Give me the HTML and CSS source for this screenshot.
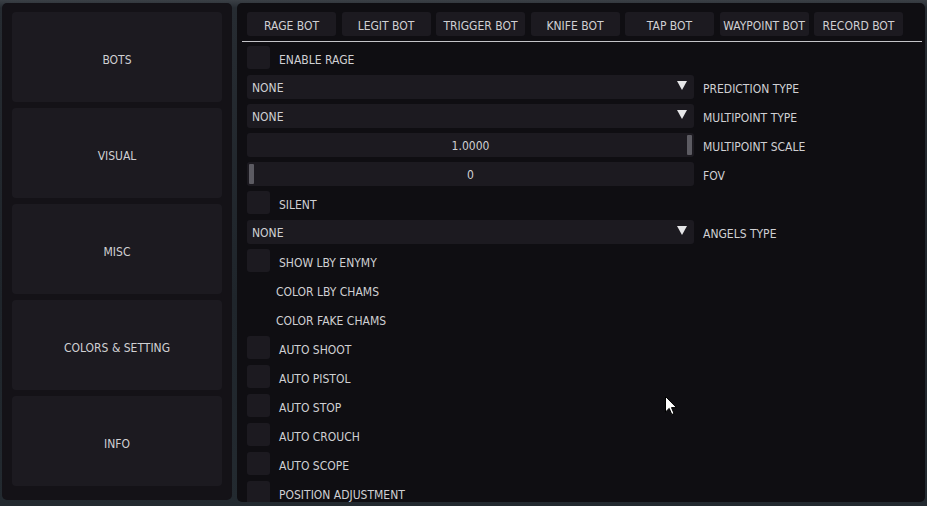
FILE: index.html
```html
<!DOCTYPE html>
<html>
<head>
<meta charset="utf-8">
<link rel="stylesheet" href="styles.css">
</head>
<body>
<div class="screen">
  <aside class="side">
    <div class="side-btn">BOTS</div>
    <div class="side-btn">VISUAL</div>
    <div class="side-btn">MISC</div>
    <div class="side-btn">COLORS &amp; SETTING</div>
    <div class="side-btn">INFO</div>
  </aside>
  <main class="main">
    <nav class="tabs">
      <div class="tab">RAGE BOT</div>
      <div class="tab">LEGIT BOT</div>
      <div class="tab">TRIGGER BOT</div>
      <div class="tab">KNIFE BOT</div>
      <div class="tab">TAP BOT</div>
      <div class="tab">WAYPOINT BOT</div>
      <div class="tab">RECORD BOT</div>
    </nav>
    <div class="sep"></div>
    <div class="rows">
      <div class="row"><span class="check"></span><span class="label">ENABLE RAGE</span></div>
      <div class="row"><div class="combo"><span class="combo-text">NONE</span><span class="arrow"></span></div><span class="side-label">PREDICTION TYPE</span></div>
      <div class="row"><div class="combo"><span class="combo-text">NONE</span><span class="arrow"></span></div><span class="side-label">MULTIPOINT TYPE</span></div>
      <div class="row"><div class="slider grab-right"><span class="grab"></span><span class="value">1.0000</span></div><span class="side-label">MULTIPOINT SCALE</span></div>
      <div class="row"><div class="slider grab-left"><span class="grab"></span><span class="value">0</span></div><span class="side-label">FOV</span></div>
      <div class="row"><span class="check"></span><span class="label">SILENT</span></div>
      <div class="row"><div class="combo"><span class="combo-text">NONE</span><span class="arrow"></span></div><span class="side-label">ANGELS TYPE</span></div>
      <div class="row"><span class="check"></span><span class="label">SHOW LBY ENYMY</span></div>
      <div class="row"><span class="text-only">COLOR LBY CHAMS</span></div>
      <div class="row"><span class="text-only">COLOR FAKE CHAMS</span></div>
      <div class="row"><span class="check"></span><span class="label">AUTO SHOOT</span></div>
      <div class="row"><span class="check"></span><span class="label">AUTO PISTOL</span></div>
      <div class="row"><span class="check"></span><span class="label">AUTO STOP</span></div>
      <div class="row"><span class="check"></span><span class="label">AUTO CROUCH</span></div>
      <div class="row"><span class="check"></span><span class="label">AUTO SCOPE</span></div>
      <div class="row"><span class="check"></span><span class="label">POSITION ADJUSTMENT</span></div>
    </div>
  </main>
  <svg class="cursor" width="13" height="20" viewBox="0 0 13 20">
    <path d="M0.5 0.5 L0.5 16 L4.2 12.4 L6.8 18.5 L9 17.5 L6.5 11.6 L11.5 11.6 Z" fill="#ffffff" stroke="#000000" stroke-width="1"/>
  </svg>
</div>
</body>
</html>
```
FILE: styles.css
```css
html, body {
  margin: 0;
  padding: 0;
}
body {
  width: 927px;
  height: 506px;
  overflow: hidden;
  background: linear-gradient(180deg, #3b4046 0px, #262b31 8px, #1f252b 60%, #232a30 100%);
  font-family: "DejaVu Sans Condensed", "DejaVu Sans", sans-serif;
  font-size: 12px;
  color: #d0d0d3;
}
.screen {
  position: relative;
  display: flex;
  gap: 5px;
  padding: 3px 2px 0 2px;
  height: 506px;
  box-sizing: border-box;
}
.side {
  width: 230px;
  height: 497px;
  box-sizing: border-box;
  background: #141217;
  border-radius: 5px;
  padding: 9px 10px;
  display: flex;
  flex-direction: column;
  gap: 6px;
}
.side-btn {
  height: 90px;
  box-sizing: border-box;
  padding-top: 5px;
  background: #1c1a20;
  border-radius: 4px;
  display: flex;
  align-items: center;
  justify-content: center;
}
.main {
  width: 688px;
  height: 499px;
  box-sizing: border-box;
  background: #0f0e12;
  border-radius: 5px;
  padding: 9px 3px 0 5px;
  overflow: hidden;
}
.tabs {
  display: grid;
  grid-template-columns: repeat(7, 89px);
  column-gap: 5.5px;
  padding-left: 5px;
}
.tab {
  height: 24px;
  box-sizing: border-box;
  padding-top: 3px;
  background: #1c1a20;
  border-radius: 3px;
  display: flex;
  align-items: center;
  justify-content: center;
}
.sep {
  height: 1px;
  background: #c4c4c8;
  margin-top: 5px;
}
.rows {
  padding: 4px 0 0 5px;
  display: flex;
  flex-direction: column;
  gap: 6px;
}
.row {
  height: 23px;
  display: flex;
  align-items: center;
  flex-shrink: 0;
}
.check {
  width: 23px;
  height: 23px;
  background: #1c1a20;
  border-radius: 3px;
  flex-shrink: 0;
}
.label {
  margin-left: 9px;
  padding-top: 5px;
}
.text-only {
  margin-left: 29px;
  padding-top: 5px;
}
.combo, .slider {
  width: 447px;
  height: 24px;
  background: #1c1a20;
  border-radius: 3px;
  box-sizing: border-box;
  flex-shrink: 0;
}
.combo {
  display: flex;
  align-items: center;
  justify-content: space-between;
  padding: 0 7px 0 5px;
}
.combo-text {
  padding-top: 2px;
}
.arrow {
  width: 0;
  height: 0;
  border-left: 5px solid transparent;
  border-right: 5px solid transparent;
  border-top: 9px solid #e6e6e8;
  margin-top: -2px;
}
.slider {
  position: relative;
  display: flex;
  align-items: center;
  justify-content: center;
}
.value {
  padding-top: 2px;
}
.grab {
  position: absolute;
  top: 2px;
  width: 5px;
  height: 20px;
  background: #5c5b62;
  border-radius: 1px;
}
.grab-right .grab { right: 2px; }
.grab-left .grab { left: 2px; }
.side-label {
  margin-left: 9px;
  padding-top: 5px;
}
.cursor {
  position: absolute;
  left: 665px;
  top: 396px;
}
```
